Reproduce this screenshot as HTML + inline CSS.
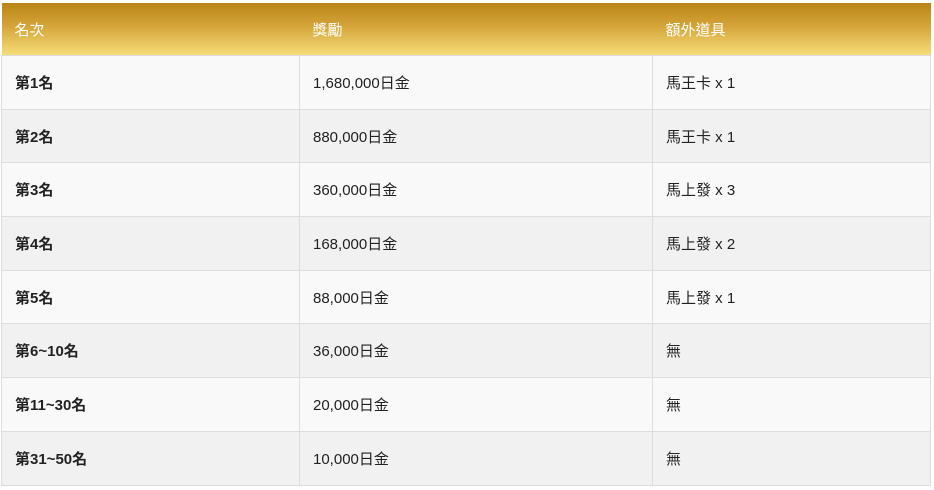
<!DOCTYPE html><html><head><meta charset="utf-8"><style>
body{margin:0;background:#fff;font-family:"Liberation Sans","Noto Sans CJK TC",sans-serif;}
table{position:absolute;left:1px;top:3px;width:930px;border-collapse:collapse;font-size:15px;color:#222;table-layout:fixed}
th{height:52px;padding:0 0 0 13px;text-align:left;color:#fff;font-weight:normal;background:linear-gradient(#b98415 0%,#d5a53a 45%,#f6dd7a 100%);}
td{height:52.7px;padding:0 0 0 13px;border:1px solid #ddd;border-left:none;}
td:first-child{font-weight:bold;border-left:1px solid #ddd}
tr:nth-child(odd) td{background:#f9f9f9}
tr:nth-child(even) td{background:#f1f1f1}
</style></head><body><table>
<colgroup><col style="width:298px"><col style="width:353px"><col></colgroup>
<thead><tr><th>名次</th><th>獎勵</th><th>額外道具</th></tr></thead>
<tbody>
<tr><td>第1名</td><td>1,680,000日金</td><td>馬王卡 x 1</td></tr>
<tr><td>第2名</td><td>880,000日金</td><td>馬王卡 x 1</td></tr>
<tr><td>第3名</td><td>360,000日金</td><td>馬上發 x 3</td></tr>
<tr><td>第4名</td><td>168,000日金</td><td>馬上發 x 2</td></tr>
<tr><td>第5名</td><td>88,000日金</td><td>馬上發 x 1</td></tr>
<tr><td>第6~10名</td><td>36,000日金</td><td>無</td></tr>
<tr><td>第11~30名</td><td>20,000日金</td><td>無</td></tr>
<tr><td>第31~50名</td><td>10,000日金</td><td>無</td></tr>
</tbody></table></body></html>
